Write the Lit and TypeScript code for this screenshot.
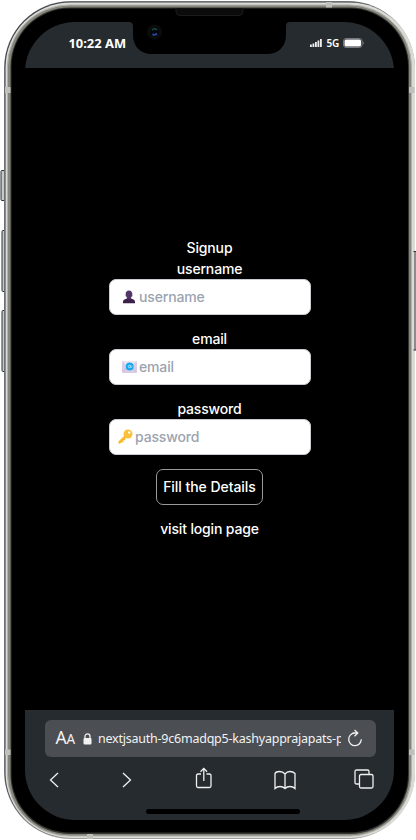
import { LitElement, html, css, svg } from "lit";
import { customElement, property } from "lit/decorators.js";

const person = svg`<svg class="emoji" width="14" height="14" viewBox="0 0 14 14">
  <path d="M1 13.2v-1.4c0-1.6 1.5-2.5 3.4-3L5 8.300h4l.6.5c1.900.5 3.400 1.400 3.400 3v1.400z" fill="#3b2149"/>
  <path d="M5.300 6.500h3.400v3L7 10.600 5.300 9.500z" fill="#432653"/>
  <path d="M3.700 3.700C3.700 1.700 5 .4 7 .4s3.300 1.300 3.300 3.300v1.200c.3.800-.1 1.500-.6 1.700C9.100 8 8.100 8.700 7 8.700S4.900 8 4.300 6.600c-.5-.2-.9-.9-.6-1.700z" fill="#533566"/>
</svg>`;

const envelope = svg`<svg class="emoji" width="15" height="12" viewBox="0 0 15 12">
  <rect width="15" height="12" rx="1" fill="#d8cde3"/>
  <path d="M0 1l7.500 7L15 1V.5L14.500 0H.5L0 .5z" fill="#eee5f3"/>
  <path d="M.4.7l7.100 6.500L14.600.7M.4 11.300L5 6.500M14.600 11.300L10 6.500" fill="none" stroke="#c4b5d2" stroke-width=".6"/>
  <circle cx="7.700" cy="5.500" r="3.900" fill="#16a9ee"/>
  <circle cx="7.500" cy="5.500" r="1.200" fill="none" stroke="#d7f2ff" stroke-width=".8"/>
  <path d="M8.800 4.100v1.800c0 1 1.400.8 1.400-.5" fill="none" stroke="#c3eaff" stroke-width=".6"/>
</svg>`;

const key = svg`<svg class="emoji" width="15" height="15" viewBox="0 0 15 15">
  <path d="M8 7L1.700 13.300" stroke="#f9b82e" stroke-width="2.700" stroke-linecap="round"/>
  <path d="M3.600 11.600l1.700 1.500M5.500 9.700l1.500 1.300" stroke="#f9b82e" stroke-width="1.400"/>
  <circle cx="10" cy="5" r="4.500" fill="#fcc13a"/>
  <circle cx="11.200" cy="3.500" r="1.200" fill="#fff"/>
</svg>`;

@customElement("phone-frame")
export class PhoneFrame extends LitElement {
  static styles = css`
    :host { display: block; width: 416px; height: 840px; }
    svg { display: block; }
  `;
  render() {
    return html`<svg width="416" height="840" viewBox="0 0 416 840">
      <g fill="#c7c9c7" stroke="#2b3138">
        <rect x="1" y="170.500" width="6" height="30" rx="1"/>
        <rect x="2" y="230.500" width="5" height="61" rx="1"/>
        <rect x="2" y="310.500" width="5" height="61" rx="1"/>
      </g>
      <rect x="4" y="1" width="411" height="838" rx="67" fill="#9da09c"/>
      <rect x="4.500" y="1.500" width="409.500" height="836.500" rx="66" fill="#3b4248"/>
      <rect x="5.500" y="2.500" width="409.500" height="835.500" rx="65" fill="#dadad6"/>
      <rect x="7.500" y="5" width="404" height="831" rx="62" fill="#85857c" stroke="#b2b1aa"/>
      <rect x="10.500" y="7.500" width="398.500" height="826.500" rx="59" fill="#343532"/>
      <rect x="11.500" y="8.500" width="396.500" height="824" rx="58" fill="#000"/>
      <rect x="414" y="251" width="3" height="99" fill="#898d8d"/>
      <path d="M413.500 251.500h3M413.500 350h3" stroke="#333"/>
      <g fill="#bfc0bb">
        <rect x="5" y="87" width="5.500" height="6"/><rect x="409" y="87" width="5.500" height="6"/>
        <rect x="5" y="749.500" width="5.500" height="5.500"/><rect x="409" y="749.500" width="5.500" height="5.500"/>
        <rect x="326" y="2" width="6" height="5.500"/><rect x="87" y="834" width="6" height="5"/>
      </g>
      <path d="M176 8.500v3q0 4 4 4h59q4 0 4-4v-3" fill="#0b0b0b" stroke="#1b1b1b"/>
    </svg>`;
  }
}

@customElement("status-bar")
export class StatusBar extends LitElement {
  static styles = css`
    :host { display: flex; position: relative; height: 46px; flex: none; background: #262b2f; justify-content: space-between; padding: 0 30px 0 43.500px; box-sizing: border-box; }
    .notch { position: absolute; left: 108px; top: 0; overflow: visible; }
    .time { font: 700 12.900px/43px "Noto Sans", sans-serif; color: #fff; white-space: nowrap; }
    .signal { display: flex; align-items: center; height: 42px; font: 600 10px/42px "Noto Sans", sans-serif; color: #fff; letter-spacing: -.2px; }
    .bars { margin-right: 4px; }
    .battery { margin-left: 4px; }
  `;
  render() {
    return html`
      <svg class="notch" width="153" height="32" viewBox="4 0 153 32">
        <path d="M0 0q4 0 4 4v9c0 12 8 19 19 19h115c11 0 19-7 19-19V4q0-4 4-4z" fill="#000"/>
        <circle cx="25.500" cy="10" r="7.500" fill="#0b0b0c"/>
        <circle cx="25.500" cy="10" r="4" fill="#030609"/>
        <path d="M23 8q2.500-2.500 5 0" stroke="#1d4b4b" stroke-width="1.500" fill="none"/>
        <path d="M23.500 12q2 2 4.500-.5" stroke="#24469c" stroke-width="1.800" fill="none"/>
      </svg>
      <span class="time">10:22 AM</span>
      <span class="signal">
        <svg class="bars" width="12" height="8" viewBox="0 0 12 8" fill="#eee">
          <rect y="5.500" width="1.800" height="2.500"/><rect x="2.500" y="4.500" width="1.800" height="3.500"/>
          <rect x="5" y="3" width="1.800" height="5"/><rect x="7.500" y="1.500" width="1.800" height="6.500"/><rect x="10" width="1.800" height="8"/>
        </svg>
        5G
        <svg class="battery" width="21" height="10" viewBox="0 0 21 10">
          <rect x=".5" y=".5" width="18.500" height="9" rx="2.500" fill="none" stroke="#777b7e"/>
          <rect x="1.500" y="1.500" width="16.500" height="7" rx="1.500" fill="#fff"/>
          <path d="M20 3.500q1 1.500 0 3z" fill="#777b7e" stroke="#777b7e" stroke-width=".5"/>
        </svg>
      </span>`;
  }
}

@customElement("sign-field")
export class SignField extends LitElement {
  @property() label = "";
  @property({ attribute: false }) icon: unknown;
  @property({ type: Number }) inset = 12;
  @property({ type: Number }) gap = 3;
  static styles = css`
    :host { display: flex; flex-direction: column; align-items: center; margin-bottom: 13.200px; }
    .label { line-height: 21px; height: 21px; }
    .box { display: flex; align-items: center; box-sizing: border-box; width: 202px; height: 36px; border: 1px solid #c9ccd1; border-radius: 7px; background: #fff; color: #9ca3af; padding-bottom: 1px; }
    .icon { display: flex; flex: none; align-items: center; justify-content: flex-end; box-sizing: border-box; }
  `;
  render() {
    return html`<span class="label">${this.label}</span>
      <div class="box"><span class="icon" style="width:${this.inset}px;padding-right:${this.gap}px">${this.icon}</span><span>${this.label}</span></div>`;
  }
}

@customElement("browser-bar")
export class BrowserBar extends LitElement {
  static styles = css`
    :host { display: flex; flex-direction: column; height: 110px; flex: none; box-sizing: border-box; background: #262b2f; padding: 10px 18.500px 0 19.500px; color: #f2f2f2; }
    svg { display: block; flex: none; fill: none; stroke: #f0f0f0; stroke-width: 1.300; }
    .address { display: flex; align-items: center; height: 37px; border-radius: 6px; background: #4b4e53; padding: 0 12.500px 0 11px; font: 400 12.500px/37px "Noto Sans", sans-serif; }
    .aa { font-size: 17.500px; width: 27.500px; letter-spacing: -.2px; }
    .aa small { font-size: 13.500px; }
    .lock { margin-right: 6px; }
    .url { width: 243px; overflow: hidden; white-space: nowrap; letter-spacing: -.23px; }
    .tools { display: flex; justify-content: space-between; align-items: center; height: 25px; margin: 10px 1.500px 0 4px; }
    .home { width: 154px; height: 5px; border-radius: 3px; background: #000; margin: 17px 0 0 101.500px; }
    .reload { margin-left: auto; position: relative; top: -1px; }
    .forward { margin-left: 4px; }
    .share { margin: 0 -1px 3px 3px; }
    .book { margin: 0 -1.500px 0 1.500px; }
    .tabs { margin-bottom: 1px; }
  `;
  render() {
    return html`
      <div class="address">
        <span class="aa">A<small>A</small></span>
        <svg class="lock" width="9" height="12" viewBox="0 0 9 12"><rect x=".5" y="5" width="8" height="6.500" rx="1" fill="#f2f2f2" stroke="none"/><path d="M2 5.500V3.400a2.500 2.500 0 015 0v2.100"/></svg>
        <span class="url">nextjsauth-9c6madqp5-kashyapprajapats-p</span>
        <svg class="reload" width="16" height="18" viewBox="0 0 16 18"><path d="M7.500 4A6.300 6.300 0 1 0 14.300 10.300M5.500 4h5M7.500 1l3.300 3-3.300 3.200"/></svg>
      </div>
      <div class="tools">
        <svg width="10" height="16" viewBox="0 0 10 16"><path d="M9 1L1.500 8 9 15"/></svg>
        <svg class="forward" width="10" height="16" viewBox="0 0 10 16"><path d="M1 1l7.500 7L1 15"/></svg>
        <svg class="share" width="18" height="22" viewBox="0 0 18 22"><path d="M6 7H3Q1.500 7 1.500 8.500v10.500Q1.500 20.500 3 20.500h11.500q1.500 0 1.500-1.500V8.500Q16 7 14.500 7h-3M8.800 14V1.500M5.500 4.700l3.300-3.300 3.300 3.300"/></svg>
        <svg class="book" width="22" height="20" viewBox="0 0 22 20"><path d="M11 4Q9 1.500 5.500 1.500T1 3.500v15Q3 16.500 6 16.500t5 2q2-2 5-2t5 2v-15Q19 1.500 16 1.500T11 4zv14"/></svg>
        <svg class="tabs" width="20" height="20" viewBox="0 0 20 20"><rect x="5.500" y="5.500" width="13.500" height="13.500" rx="1.500"/><path d="M5.500 15H2.500Q1 15 1 13.500v-11Q1 1 2.500 1h11Q15 1 15 2.500v3"/></svg>
      </div>
      <div class="home"></div>`;
  }
}

@customElement("app-root")
export class AppRoot extends LitElement {
  static styles = css`
    :host { display: grid; width: 416px; height: 840px; background: #fff; overflow: hidden; }
    phone-frame, .screen { grid-area: 1 / 1; }
    .screen { display: flex; flex-direction: column; width: 369px; height: 798px; margin: 22px 0 0 25px; border-radius: 50px; overflow: hidden; background: #000; }
    .page { display: flex; flex-direction: column; align-items: center; flex: 1; padding-top: 169px; box-sizing: border-box; font: 450 14px/21px Inter, sans-serif; letter-spacing: -.16px; color: #fff; }
    .title { height: 21px; }
    .submit { display: flex; align-items: center; justify-content: center; box-sizing: border-box; width: 107px; height: 36px; margin-top: .8px; border: 1px solid #999; border-radius: 7px; background: #000; letter-spacing: -.05px; padding-bottom: 1px; }
    .login { margin-top: 13px; }
  `;
  render() {
    return html`<phone-frame></phone-frame>
      <main class="screen">
        <status-bar></status-bar>
        <section class="page">
          <span class="title">Signup</span>
          <sign-field label="username" .icon=${person} .inset=${29.5} .gap=${3.5}></sign-field>
          <sign-field label="email" .icon=${envelope} .inset=${29.5} .gap=${2.5}></sign-field>
          <sign-field label="password" .icon=${key} .inset=${25.5} .gap=${2}></sign-field>
          <div class="submit">Fill the Details</div>
          <span class="login">visit login page</span>
        </section>
        <browser-bar></browser-bar>
      </main>`;
  }
}
